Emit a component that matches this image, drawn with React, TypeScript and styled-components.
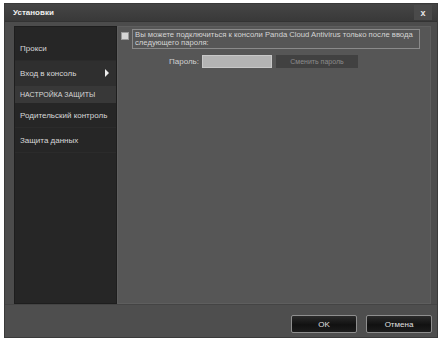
import styled, { createGlobalStyle } from 'styled-components';

const GlobalStyle = createGlobalStyle`
  html, body {
    margin: 0;
    padding: 0;
    background: #ffffff;
  }
  body {
    font-family: 'Liberation Sans', Arial, sans-serif;
  }
`;

const menuItems = [
  { label: 'Прокси', kind: 'item' },
  { label: 'Вход в консоль', kind: 'active' },
  { label: 'НАСТРОЙКА ЗАЩИТЫ', kind: 'header' },
  { label: 'Родительский контроль', kind: 'item' },
  { label: 'Защита данных', kind: 'item' },
] as const;

export default function App() {
  return (
    <>
      <GlobalStyle />
      <Page>
        <Window>
          <TitleBar>
            <Title>Установки</Title>
            <CloseButton>x</CloseButton>
          </TitleBar>
          <Body>
            <Sidebar>
              <SidebarTop />
              {menuItems.map((m) => (
                <MenuItem key={m.label} $kind={m.kind}>
                  {m.label}
                  {m.kind === 'active' && <Arrow />}
                </MenuItem>
              ))}
            </Sidebar>
            <Content>
              <OptionRow>
                <CheckBox />
                <OptionText>
                  Вы можете подключиться к консоли Panda Cloud Antivirus только после ввода
                  <br />
                  следующего пароля:
                </OptionText>
              </OptionRow>
              <PasswordRow>
                <Label>Пароль:</Label>
                <PasswordInput />
                <ChangeButton>Сменить пароль</ChangeButton>
              </PasswordRow>
            </Content>
          </Body>
          <Footer>
            <DialogButton>OK</DialogButton>
            <DialogButton>Отмена</DialogButton>
          </Footer>
        </Window>
      </Page>
    </>
  );
}

const Page = styled.div`
  width: 442px;
  height: 343px;
  padding: 3px 4px 5px 4px;
  box-sizing: border-box;
`;

const Window = styled.div`
  width: 100%;
  height: 100%;
  background: #4c4c4c;
  border: 1px solid #3a3a3a;
  box-sizing: border-box;
  display: flex;
  flex-direction: column;
`;

const TitleBar = styled.div`
  height: 17px;
  flex-shrink: 0;
  background: linear-gradient(#454545, #393939);
  border-bottom: 1px solid #333;
  display: flex;
  align-items: center;
  justify-content: space-between;
  padding: 0 5px 0 8px;
`;

const Title = styled.div`
  color: #f0f0f0;
  font-size: 8px;
  font-weight: bold;
`;

const CloseButton = styled.div`
  width: 18px;
  height: 15px;
  background: #4a4a4a;
  color: #e8e8e8;
  font-size: 9px;
  font-weight: bold;
  display: flex;
  align-items: center;
  justify-content: center;
`;

const Body = styled.div`
  flex: 1;
  display: flex;
  padding: 4px 6px 0 9px;
  border-bottom: 1px solid #444;
`;

const Sidebar = styled.div`
  width: 103px;
  flex-shrink: 0;
  box-sizing: border-box;
  background: #262626;
  border: 1px solid #1e1e1e;
  display: flex;
  flex-direction: column;
`;

const SidebarTop = styled.div`
  height: 9px;
`;

const MenuItem = styled.div<{ $kind: 'item' | 'active' | 'header' }>`
  position: relative;
  height: ${(p) => (p.$kind === 'header' ? '16px' : '24px')};
  display: flex;
  align-items: center;
  padding-left: 5px;
  color: #d8d8d8;
  font-size: ${(p) => (p.$kind === 'header' ? '7px' : '8px')};
  background: ${(p) =>
    p.$kind === 'active' ? '#2f2f2f' : p.$kind === 'header' ? '#383838' : 'transparent'};
  border-bottom: 1px solid ${(p) => (p.$kind === 'item' ? '#2b2b2b' : 'transparent')};
`;

const Arrow = styled.span`
  position: absolute;
  right: 7px;
  top: 50%;
  margin-top: -4px;
  border-left: 4px solid #eeeeee;
  border-top: 4px solid transparent;
  border-bottom: 4px solid transparent;
`;

const Content = styled.div`
  flex: 1;
  min-width: 0;
  background: #565656;
  border: 1px solid #5e5e5e;
  padding: 2px 10px 0 3px;
  display: flex;
  flex-direction: column;
`;

const OptionRow = styled.div`
  display: flex;
  align-items: flex-start;
  gap: 3px;
`;

const CheckBox = styled.div`
  width: 6px;
  height: 6px;
  margin-top: 3px;
  background: #d5d5d5;
  border: 1px solid #999;
`;

const OptionText = styled.div`
  flex: 1;
  border: 1px solid #8a8a8a;
  padding: 1px 1px 1px 2px;
  color: #d4d4d4;
  font-size: 7.7px;
  line-height: 8px;
  white-space: nowrap;
  overflow: hidden;
`;

const PasswordRow = styled.div`
  display: flex;
  align-items: center;
  margin-top: 6px;
  padding-left: 48px;
`;

const Label = styled.div`
  color: #d0d0d0;
  font-size: 8px;
  margin-right: 3px;
`;

const PasswordInput = styled.div`
  width: 68px;
  height: 11px;
  background: #b4b4b4;
  border: 1px solid #c8c8c8;
`;

const ChangeButton = styled.div`
  width: 82px;
  height: 13px;
  margin-left: 4px;
  background: #414141;
  color: #8c8c8c;
  font-size: 7px;
  display: flex;
  align-items: center;
  justify-content: center;
`;

const Footer = styled.div`
  height: 32px;
  flex-shrink: 0;
  display: flex;
  align-items: flex-end;
  justify-content: flex-end;
  gap: 9px;
  padding: 0 5px 4px 0;
  box-sizing: border-box;
  background: #4e4e4e;
`;

const DialogButton = styled.div`
  width: 64px;
  height: 16px;
  border: 1px solid #8e8e8e;
  border-radius: 2px;
  background: linear-gradient(#2a2a2a, #111111 55%, #1c1c1c);
  color: #e0e0e0;
  font-size: 8px;
  display: flex;
  align-items: center;
  justify-content: center;
`;
